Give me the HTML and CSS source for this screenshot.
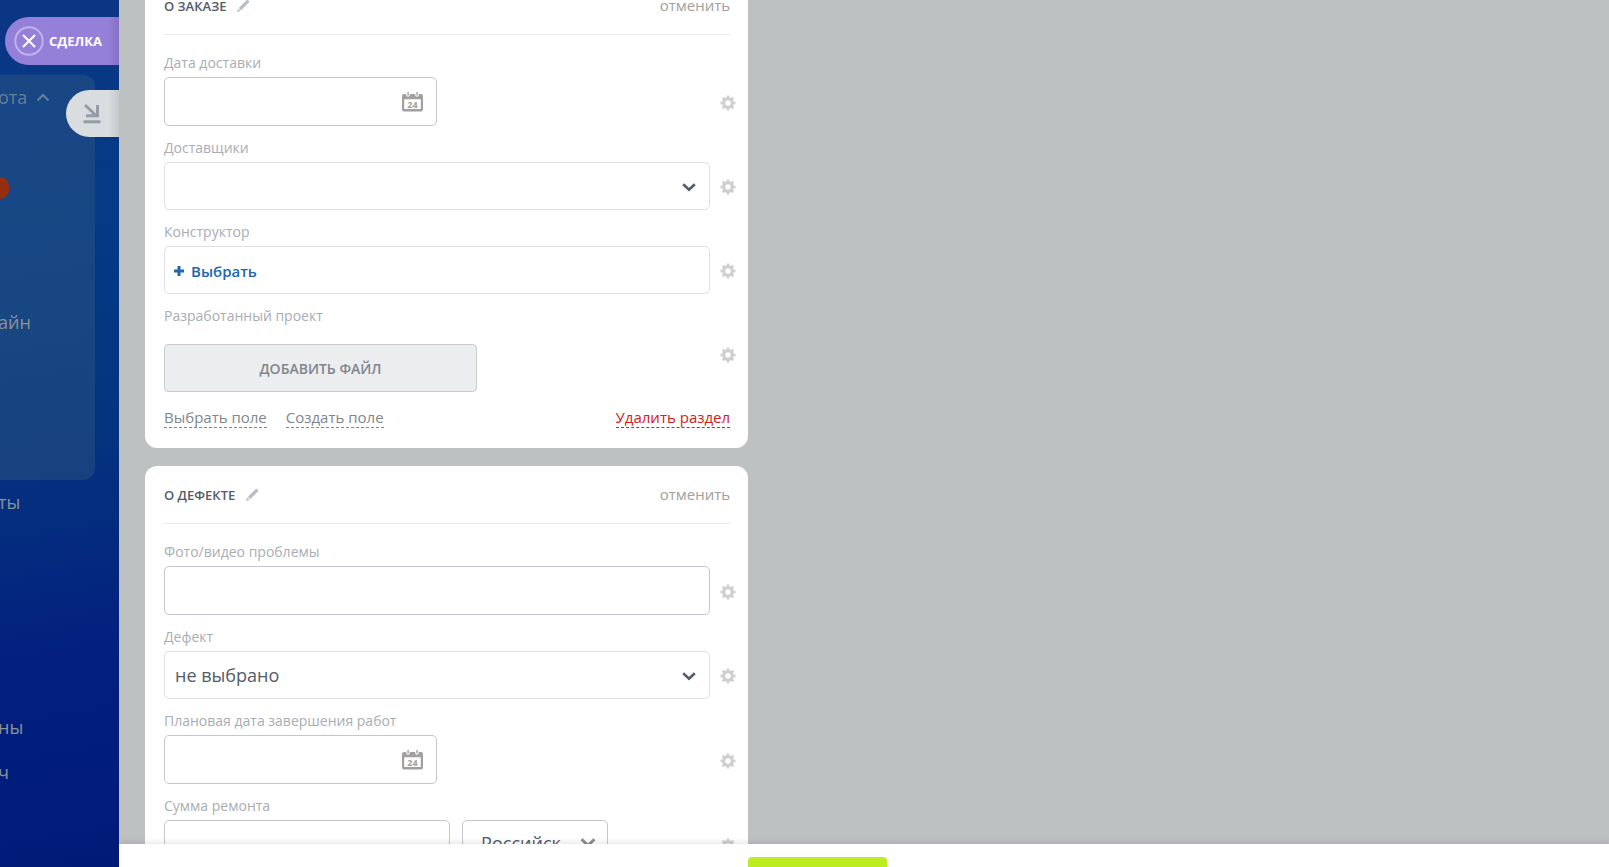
FILE: index.html
```html
<!DOCTYPE html>
<html lang="ru">
<head>
  <meta charset="UTF-8">
  <meta name="viewport" content="width=device-width, initial-scale=1.0">
  <title>Сделка</title>
  <link rel="stylesheet" href="styles.css">
</head>
<body>
  <!-- Shared icons -->
  <svg class="sprite" aria-hidden="true">
    <symbol id="icon-gear" viewBox="0 0 16 16">
      <g fill="none" stroke="currentColor">
        <circle cx="8" cy="8" r="4.3" stroke-width="3.2"/>
        <path stroke-width="2.6" d="M8 .5v2.2M8 13.3v2.2M.5 8h2.2M13.3 8h2.2M2.7 2.7l1.6 1.6M11.7 11.7l1.6 1.6M2.7 13.3l1.6-1.6M11.7 4.3l1.6-1.6"/>
      </g>
    </symbol>
    <symbol id="icon-pencil" viewBox="0 0 14 14">
      <path fill="currentColor" d="M10.6 1.2c.5-.5 1-.5 1.5 0l.8.8c.5.5.5 1 0 1.5L5.2 11.2 2.8 8.9zM2.2 9.6l2.3 2.3-3.3 1.1-.2-.2z"/>
    </symbol>
    <symbol id="icon-calendar" viewBox="0 0 22 20">
      <path fill="currentColor" fill-rule="evenodd" d="M2 2h2.200v1a1.800 1.800 0 0 0 3.600 0V2h5.400v1a1.800 1.800 0 0 0 3.600 0V2H19a2 2 0 0 1 2 2v13.500a2 2 0 0 1-2 2H2a2 2 0 0 1-2-2V4a2 2 0 0 1 2-2zM2.200 7.200v9.800h16.600V7.200z"/>
      <path fill="currentColor" d="M5.400 0h1.400v3.500H5.400zM14.400 0h1.400v3.500h-1.400z"/>
      <text x="10.500" y="15.500" text-anchor="middle" font-size="9" font-weight="700" fill="currentColor">24</text>
    </symbol>
    <symbol id="icon-chevron" viewBox="0 0 14 9">
      <path fill="none" stroke="currentColor" stroke-width="2.6" d="M1.200 1.200L7 6.800l5.800-5.600"/>
    </symbol>
  </svg>

  <nav class="sidebar">
    <ul class="menu menu-group">
      <li><a href="#">ота</a>
        <svg class="menu-caret" viewBox="0 0 14 9"><path d="M1.500 7.500L7 2l5.500 5.500"/></svg>
      </li>
      <li></li>
      <li><span class="badge"></span></li>
      <li></li>
      <li></li>
      <li><a href="#">айн</a></li>
      <li></li>
      <li></li>
      <li></li>
    </ul>
    <ul class="menu">
      <li><a href="#">ты</a></li>
      <li></li>
      <li></li>
      <li></li>
      <li></li>
      <li><a href="#">ны</a></li>
      <li><a href="#">ч</a></li>
    </ul>
    <div class="slider-labels">
      <button class="label-close">
        <svg viewBox="0 0 30 30">
          <circle cx="15" cy="15" r="13.7"/>
          <path d="M9 9l12 12M21 9L9 21"/>
        </svg>
        СДЕЛКА
      </button>
      <button class="label-minimize" aria-label="Свернуть">
        <svg viewBox="0 0 18 21">
          <path d="M2 2l11 10.500M3 12.800h11.500V2" stroke-width="3"/>
          <path d="M.5 18.800h17" stroke-width="3"/>
        </svg>
      </button>
    </div>
  </nav>

  <main class="slider">
    <div class="column">
      <section class="card">
        <header class="card-header">
          <h2>О ЗАКАЗЕ</h2>
          <button class="icon-button" aria-label="Переименовать"><svg class="pencil"><use href="#icon-pencil"/></svg></button>
          <button class="cancel">отменить</button>
        </header>

        <div class="field">
          <label for="delivery-date">Дата доставки</label>
          <div class="control half">
            <input class="tall" type="text" id="delivery-date">
            <svg class="calendar"><use href="#icon-calendar"/></svg>
          </div>
          <button class="icon-button gear" aria-label="Настроить"><svg><use href="#icon-gear"/></svg></button>
        </div>

        <div class="field">
          <label for="couriers">Доставщики</label>
          <div class="control">
            <select id="couriers"><option></option></select>
            <svg class="chevron"><use href="#icon-chevron"/></svg>
          </div>
          <button class="icon-button gear" aria-label="Настроить"><svg><use href="#icon-gear"/></svg></button>
        </div>

        <div class="field">
          <label for="designer">Конструктор</label>
          <div class="control picker">
            <button id="designer">
              <svg viewBox="0 0 10 10"><path d="M5 0v10M0 5h10"/></svg>
              Выбрать
            </button>
          </div>
          <button class="icon-button gear" aria-label="Настроить"><svg><use href="#icon-gear"/></svg></button>
        </div>

        <div class="field field-file">
          <label for="project">Разработанный проект</label>
          <div class="control">
            <button class="add-file" id="project">ДОБАВИТЬ ФАЙЛ</button>
          </div>
          <button class="icon-button gear" aria-label="Настроить"><svg><use href="#icon-gear"/></svg></button>
        </div>

        <footer class="card-footer">
          <a href="#">Выбрать поле</a>
          <a href="#">Создать поле</a>
          <a href="#" class="remove">Удалить раздел</a>
        </footer>
      </section>

      <section class="card">
        <header class="card-header">
          <h2>О ДЕФЕКТЕ</h2>
          <button class="icon-button" aria-label="Переименовать"><svg class="pencil"><use href="#icon-pencil"/></svg></button>
          <button class="cancel">отменить</button>
        </header>

        <div class="field">
          <label for="media">Фото/видео проблемы</label>
          <div class="control">
            <input class="tall" type="text" id="media">
          </div>
          <button class="icon-button gear" aria-label="Настроить"><svg><use href="#icon-gear"/></svg></button>
        </div>

        <div class="field">
          <label for="defect">Дефект</label>
          <div class="control">
            <select id="defect"><option>не выбрано</option></select>
            <svg class="chevron"><use href="#icon-chevron"/></svg>
          </div>
          <button class="icon-button gear" aria-label="Настроить"><svg><use href="#icon-gear"/></svg></button>
        </div>

        <div class="field">
          <label for="due-date">Плановая дата завершения работ</label>
          <div class="control half">
            <input class="tall" type="text" id="due-date">
            <svg class="calendar"><use href="#icon-calendar"/></svg>
          </div>
          <button class="icon-button gear" aria-label="Настроить"><svg><use href="#icon-gear"/></svg></button>
        </div>

        <div class="field">
          <label for="amount">Сумма ремонта</label>
          <div class="control money">
            <input class="tall" type="text" id="amount">
            <div class="currency">
              <select class="tall" aria-label="Валюта"><option>Российск</option></select>
              <svg class="chevron"><use href="#icon-chevron"/></svg>
            </div>
          </div>
          <button class="icon-button gear" aria-label="Настроить"><svg><use href="#icon-gear"/></svg></button>
        </div>
      </section>
    </div>

    <div class="actions">
      <button class="save" aria-label="Сохранить"></button>
    </div>
  </main>
</body>
</html>
```

FILE: styles.css
```css
/* Reset and base styles */
* {
  padding: 0;
  margin: 0;
  box-sizing: border-box;
}
body {
  height: 100vh;
  display: flex;
  overflow: hidden;
  font-family: "Open Sans", "Noto Sans", sans-serif;
  color: #535c69;
}
button,
input,
select {
  font: inherit;
  color: inherit;
}
button {
  background: none;
  border: none;
  cursor: pointer;
}
.sprite {
  display: none;
}

/* Left menu */
.sidebar {
  position: relative;
  flex: 0 0 119px;
  padding-top: 75px;
  background: linear-gradient(170deg, #0b3684 0%, #043a86 25%, #04347f 50%, #03207e 75%, #001a78 100%);
}
.menu-group {
  margin-right: 24px;
  background: rgba(110, 140, 130, 0.18);
  border-radius: 0 12px 12px 0;
}
.menu {
  list-style: none;
}
.menu li {
  height: 45px;
  display: flex;
  align-items: center;
  gap: 9px;
}
.menu a {
  margin-left: -2px;
  padding-bottom: 2px;
  font-size: 18px;
  color: #8c9299;
  text-decoration: none;
}
.menu-group li:first-child a {
  color: #62809a;
}
.menu-caret {
  width: 14px;
  height: 9px;
  fill: none;
  stroke: #62809a;
  stroke-width: 2;
}
.badge {
  width: 9px;
  height: 22px;
  background: #962d10;
  border-radius: 0 11px 11px 0;
}

/* Tabs hanging on the slider edge */
.slider-labels {
  position: absolute;
  top: 17px;
  right: 0;
  display: flex;
  flex-direction: column;
  align-items: flex-end;
  gap: 25px;
}
.label-close {
  width: 114px;
  height: 48px;
  padding-left: 9px;
  display: flex;
  align-items: center;
  gap: 5px;
  border-radius: 24px 0 0 24px;
  background: linear-gradient(90deg, #9480d9 90%, #8471c4);
  color: #ffffff;
  font-size: 13px;
  font-weight: 700;
}
.label-close svg {
  width: 30px;
  height: 30px;
  fill: none;
  stroke: #ffffff;
  stroke-width: 2;
}
.label-close circle {
  stroke: #bfb3e8;
}
.label-minimize {
  width: 53px;
  height: 47px;
  padding-left: 17px;
  display: flex;
  align-items: center;
  border-radius: 24px 0 0 24px;
  background: linear-gradient(90deg, #dadde0 80%, #c6c9cc);
}
.label-minimize svg {
  width: 18px;
  height: 21px;
  fill: none;
  stroke: #959ca6;
}

/* Slider */
.slider {
  flex: 1;
  position: relative;
  padding: 0 28px 0 26px;
  background: #bdc1c2;
  overflow: hidden;
}
.column {
  width: 42%;
  margin-top: -23px;
  display: flex;
  flex-direction: column;
  gap: 18px;
}
.card {
  padding: 0 12px 20px 19px;
  background: #ffffff;
  border-radius: 12px;
}
.card-header {
  height: 58px;
  margin: 0 6px 6px 0;
  display: flex;
  align-items: center;
  gap: 10px;
  border-bottom: 1px solid #e8eaec;
}
.card-header h2 {
  font-size: 13px;
  font-weight: 600;
}
.cancel {
  margin-left: auto;
  padding-bottom: 2px;
  font-size: 15px;
  color: #a0a0a0;
}
.icon-button {
  display: flex;
  color: #b8bec6;
}
.pencil {
  width: 14px;
  height: 14px;
}

/* Fields: control on the left, gear on the right */
.field {
  display: grid;
  grid-template-columns: 1fr 16px;
  column-gap: 10px;
  align-items: center;
}
.field label {
  grid-column: 1 / -1;
  padding: 12px 0 4px;
  font-size: 14px;
  line-height: 20px;
  color: #a8adb4;
}
.control {
  position: relative;
}
.half {
  width: 50%;
}
.control input,
.control select,
.picker {
  display: block;
  width: 100%;
  height: 48px;
  padding: 0 10px;
  background: #ffffff;
  border: 1px solid #dfe0e3;
  border-radius: 5px;
  font-size: 18px;
}
.control select {
  appearance: none;
}
.control .tall {
  height: 49px;
  border-color: #c4c7cd;
}
.calendar {
  position: absolute;
  top: 15px;
  right: 13px;
  width: 22px;
  height: 20px;
  color: #a0a0a0;
}
.chevron {
  position: absolute;
  top: 21px;
  right: 14px;
  width: 14px;
  height: 9px;
  color: #535c69;
  pointer-events: none;
}
.gear {
  padding-top: 2px;
}
.gear svg {
  width: 16px;
  height: 16px;
  color: #cfcfcf;
}
.picker {
  display: flex;
  align-items: center;
  padding: 2px 9px 0;
}
.picker button {
  display: flex;
  align-items: center;
  gap: 7px;
  font-size: 15px;
  font-weight: 600;
  color: #2067b0;
}
.picker svg {
  width: 10px;
  height: 10px;
  stroke: currentColor;
  stroke-width: 3;
}
.field-file .control {
  padding-top: 14px;
}
.field-file .gear {
  margin-bottom: 14px;
}
.add-file {
  width: 313px;
  max-width: 100%;
  height: 48px;
  background: #ebedef;
  border: 1px solid #c6cdd3;
  border-radius: 4px;
  font-size: 14px;
  font-weight: 600;
  color: #80868e;
}
.money {
  display: flex;
  gap: 12px;
  margin-right: 102px;
}
.money input {
  flex: 1;
  min-width: 0;
}
.currency {
  position: relative;
  flex: 0 0 146px;
}
.currency select {
  padding: 0 18px 4px;
}
.currency .chevron {
  top: 18px;
  right: 12px;
  width: 16px;
  height: 10px;
  color: #8c8c8c;
}
.card-footer {
  display: flex;
  gap: 19px;
  margin: 16px 6px 0 0;
}
.card-footer a {
  font-size: 15px;
  line-height: 19px;
  color: #80868e;
  text-decoration: none;
  border-bottom: 1px dashed currentColor;
}
.card-footer .remove {
  margin-left: auto;
  color: #d22020;
}

/* Bottom panel */
.actions {
  position: absolute;
  right: 0;
  bottom: 0;
  left: 0;
  height: 23px;
  padding: 13px 93px 0 0;
  display: flex;
  justify-content: center;
  background: #ffffff;
  box-shadow: 0 -2px 6px rgba(0, 0, 0, 0.1);
}
.save {
  width: 139px;
  background: #bbed21;
  border-radius: 4px 4px 0 0;
}
```
